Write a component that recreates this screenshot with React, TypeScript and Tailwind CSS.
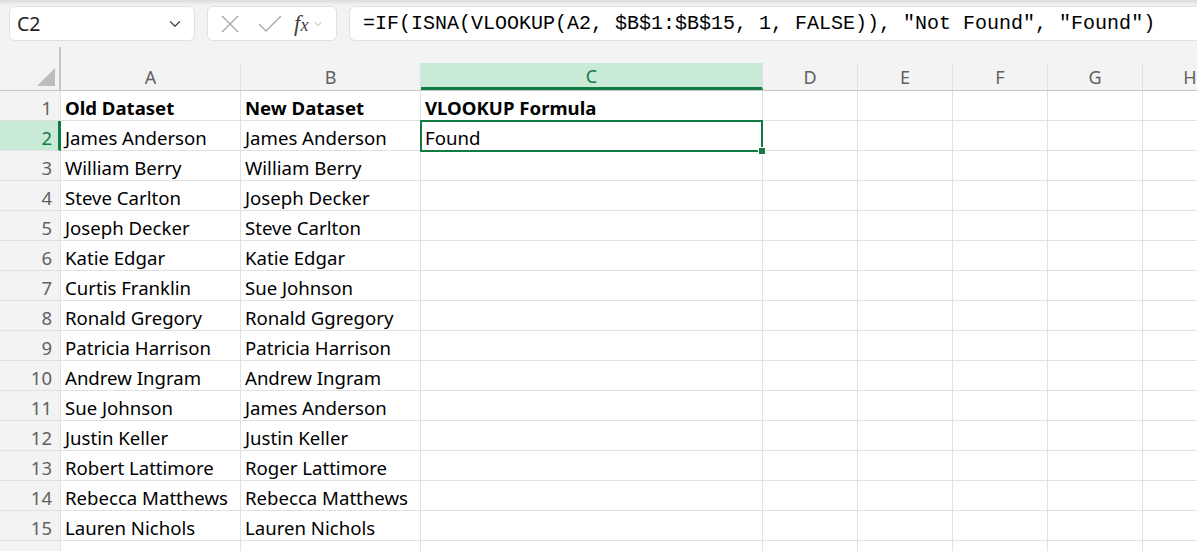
import { ChevronDown } from 'lucide-react'

const columns = [
  { key: 'A', width: 'w-[180px]' },
  { key: 'B', width: 'w-[180px]' },
  { key: 'C', width: 'w-[342px]' },
  { key: 'D', width: 'w-[95px]' },
  { key: 'E', width: 'w-[95px]' },
  { key: 'F', width: 'w-[95px]' },
  { key: 'G', width: 'w-[95px]' },
  { key: 'H', width: 'w-[95px]' },
]

const oldNames = [
  'James Anderson',
  'William Berry',
  'Steve Carlton',
  'Joseph Decker',
  'Katie Edgar',
  'Curtis Franklin',
  'Ronald Gregory',
  'Patricia Harrison',
  'Andrew Ingram',
  'Sue Johnson',
  'Justin Keller',
  'Robert Lattimore',
  'Rebecca Matthews',
  'Lauren Nichols',
]

const newNames = [
  'James Anderson',
  'William Berry',
  'Joseph Decker',
  'Steve Carlton',
  'Katie Edgar',
  'Sue Johnson',
  'Ronald Ggregory',
  'Patricia Harrison',
  'Andrew Ingram',
  'James Anderson',
  'Justin Keller',
  'Roger Lattimore',
  'Rebecca Matthews',
  'Lauren Nichols',
]

type Row = { n: number; label: string; cells: string[]; bold?: boolean }

// row 16 is only partly visible, so its number is left off
const rows: Row[] = [
  { n: 1, label: '1', cells: ['Old Dataset', 'New Dataset', 'VLOOKUP Formula'], bold: true },
  ...oldNames.map((name, i) => ({
    n: i + 2,
    label: String(i + 2),
    cells: [name, newNames[i], i === 0 ? 'Found' : ''],
  })),
  { n: 16, label: '', cells: ['', '', ''] },
]

function FormulaBar() {
  return (
    <div className="flex h-[47px] items-center bg-[#f3f3f3] pl-[9px] shadow-[inset_0_5px_4px_-3px_rgba(0,0,0,0.12)]">
      <div className="flex h-[35px] w-[186px] items-center justify-between rounded-md border border-[#e1e1e1] bg-white pl-[7px] pr-[10px]">
        <span className="text-[19.5px] text-[#242424]">C2</span>
        <ChevronDown className="h-[18px] w-[18px] text-[#424242]" strokeWidth={1.6} />
      </div>

      <div className="ml-[12px] flex h-[35px] w-[130px] items-center rounded-md border border-[#e1e1e1] bg-white pl-[12px]">
        <svg className="h-[20px] w-[20px]" viewBox="0 0 20 20" fill="none" stroke="#a6a6a6" strokeWidth={1.3}>
          <path d="M2 2l16 16M18 2L2 18" />
        </svg>
        <svg className="ml-[18px] h-[20px] w-[24px]" viewBox="0 0 24 20" fill="none" stroke="#a6a6a6" strokeWidth={1.3}>
          <path d="M1 10l7 7L23 2" />
        </svg>
        <span className="ml-[12px] font-['Liberation_Serif',serif] text-[23px] italic leading-none text-[#424242]">
          f<span className="text-[18px]">x</span>
        </span>
        <ChevronDown className="ml-[4px] h-[12px] w-[12px] text-[#9e9e9e]" strokeWidth={1.6} />
      </div>

      <div className="ml-[12px] flex h-[35px] flex-1 items-center rounded-l-md border border-r-0 border-[#e1e1e1] bg-white pl-[13px]">
        <span className="whitespace-pre font-['Liberation_Mono',monospace] text-[20px] text-black">
          =IF(ISNA(VLOOKUP(A2, $B$1:$B$15, 1, FALSE)), "Not Found", "Found")
        </span>
      </div>
    </div>
  )
}

function ColumnHeaders() {
  return (
    <div className="flex h-[44px] border-b border-[#c6c6c6] bg-[#f3f3f3]">
      <div className="relative w-[61px] shrink-0 border-r-2 border-[#c6c6c6]">
        <div className="absolute bottom-[4px] right-[4px] h-0 w-0 border-b-[18px] border-l-[18px] border-b-[#bdbdbd] border-l-transparent" />
      </div>
      {columns.map((col) => {
        const active = col.key === 'C'
        return (
          <div key={col.key} className={`${col.width} shrink-0 pt-[16px]`}>
            <div
              className={
                active
                  ? 'flex h-full items-center justify-center border-b-[3px] border-r border-[#107c41] border-r-[#e1e1e1] bg-[#caead8] pt-[3px] text-[18px] text-[#107c41]'
                  : 'flex h-full items-center justify-center border-r border-[#e1e1e1] pt-[1px] text-[18px] text-[#616161]'
              }
            >
              {col.key}
            </div>
          </div>
        )
      })}
    </div>
  )
}

export default function App() {
  return (
    <div className="h-[551px] w-[1197px] overflow-hidden bg-white font-['Noto_Sans',sans-serif]">
      <FormulaBar />
      <ColumnHeaders />
      {rows.map((row) => {
        const activeRow = row.n === 2
        return (
          <div key={row.n} className="flex h-[30px]">
            <div
              className={
                activeRow
                  ? 'flex w-[61px] shrink-0 items-center justify-end border-b border-r-[3px] border-b-[#e1e1e1] border-r-[#107c41] bg-[#caead8] pr-[6px] pt-[5px] text-[18.5px] text-[#107c41]'
                  : 'flex w-[61px] shrink-0 items-center justify-end border-b border-r border-[#e1e1e1] bg-[#f3f3f3] pr-[8px] pt-[5px] text-[18.5px] text-[#616161]'
              }
            >
              {row.label}
            </div>
            {columns.map((col, ci) => {
              const text = row.cells[ci] ?? ''
              const selected = activeRow && col.key === 'C'
              return (
                <div
                  key={col.key}
                  className={`${col.width} relative flex shrink-0 items-center border-b border-r border-[#e1e1e1] pl-[4px] pt-[5px] text-[18.6px] text-black ${
                    row.bold ? 'font-bold' : ''
                  } ${selected ? 'z-10' : ''}`}
                >
                  <span className="whitespace-nowrap">{text}</span>
                  {selected && (
                    <>
                      <div className="absolute -left-[1px] -top-[1px] bottom-[-2px] right-[-1px] border-2 border-[#107c41]" />
                      <div className="absolute bottom-[-5px] right-[-4px] h-[8px] w-[8px] border border-white bg-[#107c41]" />
                    </>
                  )}
                </div>
              )
            })}
          </div>
        )
      })}
    </div>
  )
}
